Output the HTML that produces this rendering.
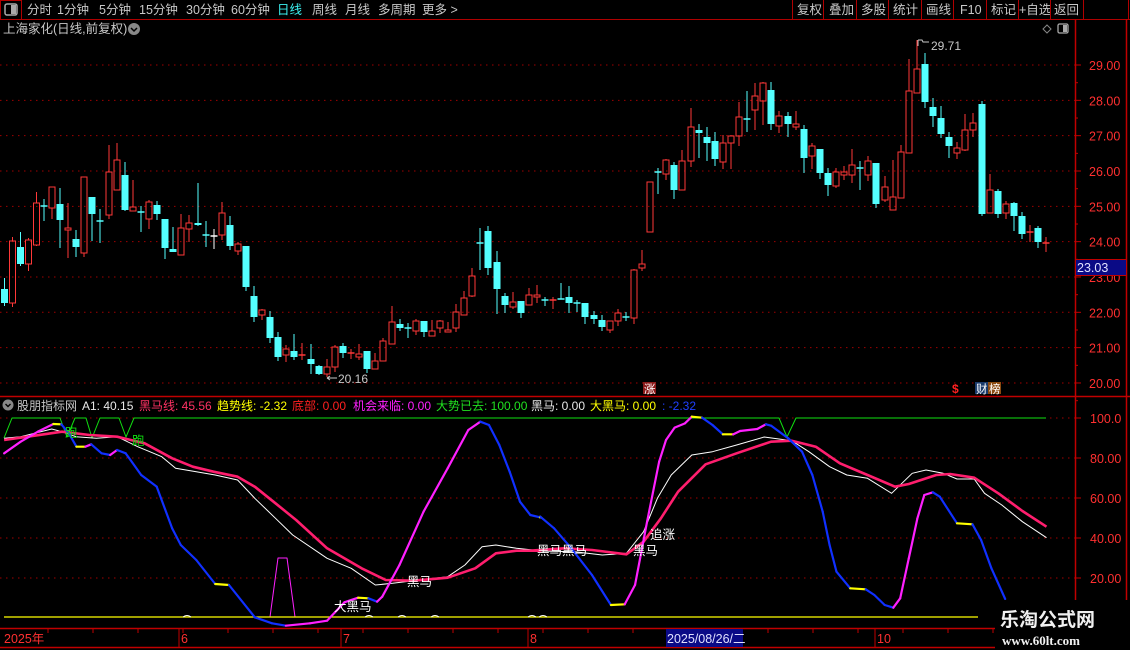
<!DOCTYPE html>
<html><head><meta charset="utf-8">
<style>
html,body{margin:0;padding:0;background:#000;width:1130px;height:650px;overflow:hidden}
svg{display:block;font-family:"Liberation Sans","Noto Sans CJK SC",sans-serif}
</style></head><body>
<svg id="s" width="1130" height="650" viewBox="0 0 1130 650" xmlns="http://www.w3.org/2000/svg">
<rect width="1130" height="650" fill="#000"/>
<g id="grid"></g>
<g id="cand"></g>
<g id="ind"></g>
<!-- top bar -->
<line x1="0" y1="19.5" x2="1130" y2="19.5" stroke="#b00000"/>
<rect x="0.5" y="0.5" width="21" height="19" fill="none" stroke="#b00000"/>
<rect x="5" y="4" width="12" height="11" rx="2" fill="none" stroke="#aaa" stroke-width="1.5"/>
<rect x="11" y="5" width="5" height="9" fill="#aaa"/>
<g font-size="12.5" fill="#c8c8c8">
<text x="27" y="14">分时</text><text x="57" y="14">1分钟</text><text x="99" y="14">5分钟</text>
<text x="139" y="14">15分钟</text><text x="186" y="14">30分钟</text><text x="231" y="14">60分钟</text>
<text x="277" y="14" fill="#3cf0f0">日线</text><text x="312" y="14">周线</text><text x="345" y="14">月线</text>
<text x="378" y="14">多周期</text><text x="422" y="14">更多 &gt;</text>
<text x="797" y="14">复权</text><text x="829" y="14">叠加</text><text x="861" y="14">多股</text>
<text x="893" y="14">统计</text><text x="926" y="14">画线</text><text x="960" y="14">F10</text>
<text x="991" y="14">标记</text><text x="1019" y="14">+自选</text><text x="1054" y="14">返回</text>
</g>
<g stroke="#b00000"><line x1="792.5" y1="0" x2="792.5" y2="19"/><line x1="823.5" y1="0" x2="823.5" y2="19"/><line x1="856.5" y1="0" x2="856.5" y2="19"/><line x1="888.5" y1="0" x2="888.5" y2="19"/><line x1="921.5" y1="0" x2="921.5" y2="19"/><line x1="953.5" y1="0" x2="953.5" y2="19"/><line x1="986.5" y1="0" x2="986.5" y2="19"/><line x1="1018.5" y1="0" x2="1018.5" y2="19"/><line x1="1050.5" y1="0" x2="1050.5" y2="19"/><line x1="1083.5" y1="0" x2="1083.5" y2="19"/><line x1="1128.5" y1="0" x2="1128.5" y2="19"/></g>
<text x="3" y="33" font-size="12.5" fill="#c8c8c8">上海家化(日线,前复权)</text>
<circle cx="134" cy="29" r="6" fill="#888"/><path d="M131 28l3 3 3-3" stroke="#000" stroke-width="1.5" fill="none"/>
<path d="M1047 25l4 4-4 4-4-4z" fill="none" stroke="#888"/>
<rect x="1058" y="24" width="10" height="9" rx="1.5" fill="none" stroke="#aaa" stroke-width="1.3"/><rect x="1063" y="25" width="4" height="7" fill="#aaa"/>
<!-- axes -->
<g stroke="#c00000" stroke-width="1.5">
<line x1="1075.5" y1="19" x2="1075.5" y2="628"/>
<line x1="1126.5" y1="19" x2="1126.5" y2="628"/>
<line x1="0" y1="396.5" x2="1130" y2="396.5"/>
<line x1="0" y1="628.5" x2="1130" y2="628.5"/>
<line x1="0" y1="647.5" x2="1130" y2="647.5"/>
</g>
<g font-size="12.5" fill="#ff3030" id="axl"></g>
<rect x="1075.5" y="259.5" width="51" height="16" fill="#0a0a86" stroke="#c00000"/>
<text x="1077" y="272" font-size="12.5" fill="#e0e0ff">23.03</text>
<!-- price labels -->
<text x="338" y="383" font-size="12" fill="#c8c8c8">20.16</text>
<path d="M337 378h-10m0 0l3-2m-3 2l3 2" stroke="#c8c8c8" fill="none"/>
<text x="931" y="50" font-size="12" fill="#c8c8c8">29.71</text>
<path d="M918 40v6m0-6h4l1 2h6" stroke="#c8c8c8" fill="none"/>
<rect x="643" y="382" width="13" height="12" fill="#8b1a1a"/><text x="644" y="393" font-size="11.5" fill="#fff">涨</text>
<text x="952" y="393" font-size="12" fill="#ff2020" font-weight="bold">$</text>
<rect x="975" y="382" width="13" height="12" fill="#1a3a6a"/><text x="976" y="393" font-size="11.5" fill="#fff">财</text>
<rect x="988" y="382" width="13" height="12" fill="#8b4a10"/><text x="989" y="393" font-size="11.5" fill="#fff">榜</text>
<!-- indicator title -->
<circle cx="8" cy="405" r="5.5" fill="#888"/><path d="M5.5 404l2.5 2.5 2.5-2.5" stroke="#000" stroke-width="1.4" fill="none"/>
<g font-size="12">
<text x="17" y="410" fill="#c8c8c8">股朋指标网</text>
<text x="82" y="410" fill="#e8e8e8">A1: 40.15</text>
<text x="139" y="410" fill="#ff3264">黑马线: 45.56</text>
<text x="217" y="410" fill="#ffff00">趋势线: -2.32</text>
<text x="292" y="410" fill="#ff2020">底部: 0.00</text>
<text x="353" y="410" fill="#ff20ff">机会来临: 0.00</text>
<text x="436" y="410" fill="#20e020">大势已去: 100.00</text>
<text x="531" y="410" fill="#e8e8e8">黑马: 0.00</text>
<text x="590" y="410" fill="#ffff00">大黑马: 0.00</text>
<text x="662" y="410" fill="#2040ff">: -2.32</text>
</g>
<!-- date axis -->
<g font-size="12.5" fill="#ff3030">
<text x="4" y="643">2025年</text><text x="181" y="643">6</text><text x="343" y="643">7</text><text x="530" y="643">8</text><text x="877" y="643">10</text>
</g>
<g stroke="#c00000" id="ticks"></g>
<rect x="666" y="629" width="77" height="18" fill="#0a0a86"/>
<text x="667" y="643" font-size="12.5" fill="#e0e0ff">2025/08/26/二</text>
<rect x="995" y="600" width="135" height="50" fill="#000"/>
<text x="1000" y="626" font-size="19" font-weight="bold" fill="#f0f0f0" font-family="Liberation Sans,Noto Sans CJK SC,sans-serif">乐淘公式网</text>
<text x="1002" y="645" font-size="13" font-weight="bold" fill="#f0f0f0" font-family="Liberation Serif,serif">www.60lt.com</text>
</svg>
<script>
var NS="http://www.w3.org/2000/svg";
function el(p,t,a){var e=document.createElementNS(NS,t);for(var k in a)e.setAttribute(k,a[k]);p.appendChild(e);return e;}
var grid=document.getElementById('grid'),cand=document.getElementById('cand'),ind=document.getElementById('ind'),axl=document.getElementById('axl'),ticks=document.getElementById('ticks');
for(var p=20;p<=29;p++){var y=65+(29-p)*35.33;
 el(grid,'line',{x1:0,y1:y,x2:1075,y2:y,stroke:'#a00000','stroke-dasharray':'1.5 4.5'});
 el(axl,'line',{x1:1075,y1:y,x2:1081,y2:y,stroke:'#c00000'});
 el(axl,'line',{x1:1075,y1:y+17.7,x2:1078,y2:y+17.7,stroke:'#c00000'});
 var t=el(axl,'text',{x:1089,y:y+5});t.textContent=p+'.00';}
[100,80,60,40,20].forEach(function(v){var y=418+(100-v)*2;
 el(grid,'line',{x1:0,y1:y,x2:1075,y2:y,stroke:'#a00000','stroke-dasharray':'1.5 4.5'});
 el(axl,'line',{x1:1075,y1:y,x2:1081,y2:y,stroke:'#c00000'});
 var t=el(axl,'text',{x:1090,y:y+5});t.textContent=(v==100?'100.0':v+'.00');});
for(var x=48;x<1075;x+=45){el(ticks,'line',{x1:x,y1:628,x2:x,y2:633});}
[181,343,530,877].forEach(function(x){el(ticks,'line',{x1:x-2,y1:628,x2:x-2,y2:647});});
var C=[[4.5,289,303,278,306,0],[12.5,241,303,237,307,1],[20.5,247,264,232,266,0],[28.5,240,264,238,271,1],[36.5,203,245,192,246,1],[44,206,206,199,221,0],[52,187,208,187,219,1],[60,204,220,188,248,0],[68,228,230,203,258,1],[76,239,247,230,257,0],[84,177,253,177,257,1],[92,197,214,197,241,0],[100,221,221,209,243,0],[109,172,215,145,219,1],[117,160,190,143,190,1],[125,175,210,162,211,0],[133,207,211,180,211,1],[141,212,212,206,232,0],[149,202,219,200,229,1],[157,205,214,201,220,0],[165,219,248,219,259,0],[173,249,252,227,252,0],[181,228,255,214,255,1],[189,223,229,215,242,1],[198,223,225,183,226,0],[206,235,235,221,247,0],[214,236,236,229,249,2],[222,213,235,202,240,1],[230,225,246,216,250,0],[238,244,251,242,255,1],[246,246,287,246,291,0],[254,296,317,286,322,0],[262,310,315,309,320,1],[270,317,338,311,343,0],[278,337,357,332,361,0],[286,349,355,345,362,1],[294,351,357,334,360,0],[302,355,355,343,360,1],[311,359,364,344,374,0],[319,366,374,365,375,0],[327,367,374,359,377,1],[335,347,367,345,372,1],[343,346,353,343,358,0],[351,353,353,349,359,1],[359,354,357,344,360,1],[367,351,369,351,373,0],[375,361,369,353,369,1],[383,341,361,338,361,1],[392,322,344,306,344,1],[400,324,328,319,331,0],[408,328,328,323,338,0],[416,321,331,319,335,1],[424,321,332,321,337,0],[432,331,336,320,336,1],[440,321,328,320,333,1],[448,330,332,322,332,1],[456,312,328,304,332,1],[464,298,315,291,315,1],[472,276,296,268,297,1],[480,243,243,228,270,0],[488,231,268,226,275,0],[497,262,289,251,314,0],[505,296,305,293,313,0],[513,302,307,292,309,1],[521,301,313,301,318,0],[529,295,305,288,305,1],[537,295,297,285,303,1],[545,300,300,297,306,0],[553,300,300,297,309,1],[561,299,299,283,299,0],[569,297,303,286,313,0],[577,303,303,300,312,0],[585,303,317,303,324,0],[594,315,319,311,324,0],[602,320,327,315,331,0],[610,321,330,321,333,1],[618,313,321,309,326,1],[626,317,317,312,321,0],[634,270,318,269,324,1],[642,264,268,250,271,1],[650,182,232,182,232,1],[658,172,172,168,194,0],[666,160,174,159,180,1],[674,165,190,162,199,0],[682,161,190,150,190,1],[691,127,161,108,167,1],[699,130,133,124,158,0],[707,137,143,127,161,0],[715,141,159,132,166,0],[723,143,162,135,169,1],[731,136,143,135,169,1],[739,117,136,102,146,1],[747,119,119,91,132,0],[755,96,110,83,130,1],[763,83,101,82,125,1],[771,90,124,82,130,0],[779,116,126,111,133,1],[788,116,124,112,137,0],[796,124,127,111,130,1],[804,129,158,125,173,0],[812,146,156,143,169,1],[820,149,173,149,179,0],[828,173,185,168,196,0],[836,172,186,168,188,1],[844,172,175,166,180,1],[852,165,175,149,183,1],[860,168,168,161,190,0],[868,161,175,156,181,1],[876,163,204,163,208,0],[885,187,200,176,202,1],[893,197,210,160,210,1],[901,152,198,145,198,1],[909,91,153,59,153,1],[917,69,93,40,93,1],[925,64,102,53,108,0],[933,107,116,98,127,0],[941,118,134,106,138,0],[949,137,146,132,158,0],[957,148,153,142,159,1],[965,130,150,114,151,1],[973,123,130,113,137,1],[982,104,214,101,216,0],[990,190,213,174,213,1],[998,191,214,189,218,0],[1006,204,213,201,219,1],[1014,203,216,202,231,0],[1022,216,234,212,239,0],[1030,232,232,225,242,1],[1038,228,242,226,248,0],[1046,243,243,237,252,1]];
C.forEach(function(c){var x=c[0],t=c[1],b=c[2],h=c[3],l=c[4],u=c[5];
 var col=u==1?'#ff3838':(u==2?'#ffffff':'#54ffff');
 if(b-t<2){el(cand,'line',{x1:x,y1:h,x2:x,y2:l,stroke:col});el(cand,'line',{x1:x-3.5,y1:t,x2:x+3.5,y2:t,stroke:col,'stroke-width':1.5});return;}
 if(u==1){el(cand,'line',{x1:x,y1:h,x2:x,y2:t,stroke:col});el(cand,'line',{x1:x,y1:b,x2:x,y2:l,stroke:col});
  el(cand,'rect',{x:x-3,y:t,width:6,height:b-t,fill:'none',stroke:col});}
 else{el(cand,'line',{x1:x,y1:h,x2:x,y2:l,stroke:col});el(cand,'rect',{x:x-3.5,y:t,width:7,height:b-t,fill:col});}
});
function conv(a,x0,sx){return a.map(function(p){return [x0+p[0]/sx,405+p[1]/3];});}
function pl(pts,col,w){el(ind,'polyline',{points:pts.map(function(p){return p[0].toFixed(1)+','+p[1].toFixed(1)}).join(' '),fill:'none',stroke:col,'stroke-width':w,'stroke-linejoin':'round'});}
var S=2.904;
pl([[4,438],[12,418],[60,418],[67,437],[75,418],[86,418],[92,438],[100,418],[119,418],[126,437],[134,418],[779,418],[787,437],[796,418],[1046,418]],'#10e010',1);
pl([[270,617],[278,558],[287,558],[295,617]],'#ff20ff',1);
pl([[4,617],[978,617]],'#ffff00',1.3);
var W=conv([[12,100],[60,95],[150,72],[180,80],[220,95],[280,100],[340,95],[400,125],[470,155],[510,190],[570,200],[625,210],[690,225],[740,280],[800,340],[850,390],[950,460],[1020,490],[1090,540],[1140,535],[1200,527],[1300,515],[1350,480],[1400,425],[1440,420],[1500,430],[1568,437]],0,S).concat(conv([[0,437],[130,440],[210,450],[280,445],[330,380],[370,280],[410,210],[470,150],[530,140],[600,120],[680,96],[760,107],[810,140],[870,185],[920,210],[980,220],[1050,265],[1110,205],[1150,195],[1200,205],[1240,222],[1290,222],[1320,265],[1370,300],[1430,350],[1500,398]],530,S));
pl(W,'#ffffff',1);
var P=conv([[12,105],[80,95],[180,80],[260,90],[340,95],[420,115],[500,160],[560,185],[620,200],[690,215],[740,245],[800,295],[860,345],[950,430],[1050,490],[1120,525],[1200,527],[1300,518],[1380,490],[1440,445],[1500,437],[1568,437]],0,S).concat(conv([[0,437],[100,430],[180,435],[280,448],[330,410],[380,340],[430,260],[510,178],[600,145],[700,110],[760,107],[830,125],[900,175],[980,210],[1060,245],[1100,237],[1180,210],[1220,207],[1290,218],[1360,265],[1430,318],[1500,365]],530,S));
pl(P,'#ff1e6e',2.6);
var A=conv([[12,145],[60,110],[110,80],[155,57],[178,58],[200,85],[222,125],[248,125],[265,118],[295,145],[320,150],[340,135],[365,145],[410,210],[455,245],[500,370],[525,420],[570,465],[625,537],[665,540],[740,637],[790,655],[830,662],[900,655],[950,647],[1000,592],[1040,578],[1070,580],[1095,590],[1110,575],[1160,480],[1230,320],[1300,190],[1360,75],[1395,50],[1420,60],[1450,120],[1480,200],[1510,290],[1540,330],[1568,337]],0,S).concat(conv([[30,335],[70,370],[120,430],[180,510],[235,600],[275,598],[305,540],[340,350],[375,170],[395,105],[420,68],[450,55],[470,35],[500,38],[530,60],[560,88],[590,88],[610,78],[660,72],[685,58],[700,62],[750,100],[790,140],[820,210],[850,320],[870,420],[890,500],[930,550],[975,553],[1000,570],[1030,600],[1055,608],[1075,580],[1100,460],[1125,340],[1145,270],[1170,262],[1190,275],[1240,355],[1285,358],[1310,405],[1340,490],[1380,582]],530,S));
for(var i=0;i<A.length-1;i++){var a=A[i],b=A[i+1];var d=b[1]-a[1];var col=d<-1?'#ff20ff':(d>1?'#1030ff':'#ffff00');
 el(ind,'line',{x1:a[0],y1:a[1],x2:b[0],y2:b[1],stroke:col,'stroke-width':2.2,'stroke-linecap':'round'});}
function tx(x,y,s,c,f){var t=el(ind,'text',{x:x,y:y,fill:c,'font-size':f||12.5});t.textContent=s;}
tx(65,437,'跑','#10e010');tx(132,445,'跑','#10e010');
tx(407,586,'黑马','#ffffff');tx(334,611,'大黑马','#ffffff');
tx(537,555,'黑马黑马','#ffffff');tx(633,555,'黑马','#ffffff');tx(650,539,'追涨','#ffffff');
[[187,617],[369,617],[402,617],[435,617],[532,617],[543,617]].forEach(function(p){el(ind,'path',{d:'M'+(p[0]-4)+' '+p[1]+'q4 -3 8 0',stroke:'#fff',fill:'none'});});
</script>
</body></html>
